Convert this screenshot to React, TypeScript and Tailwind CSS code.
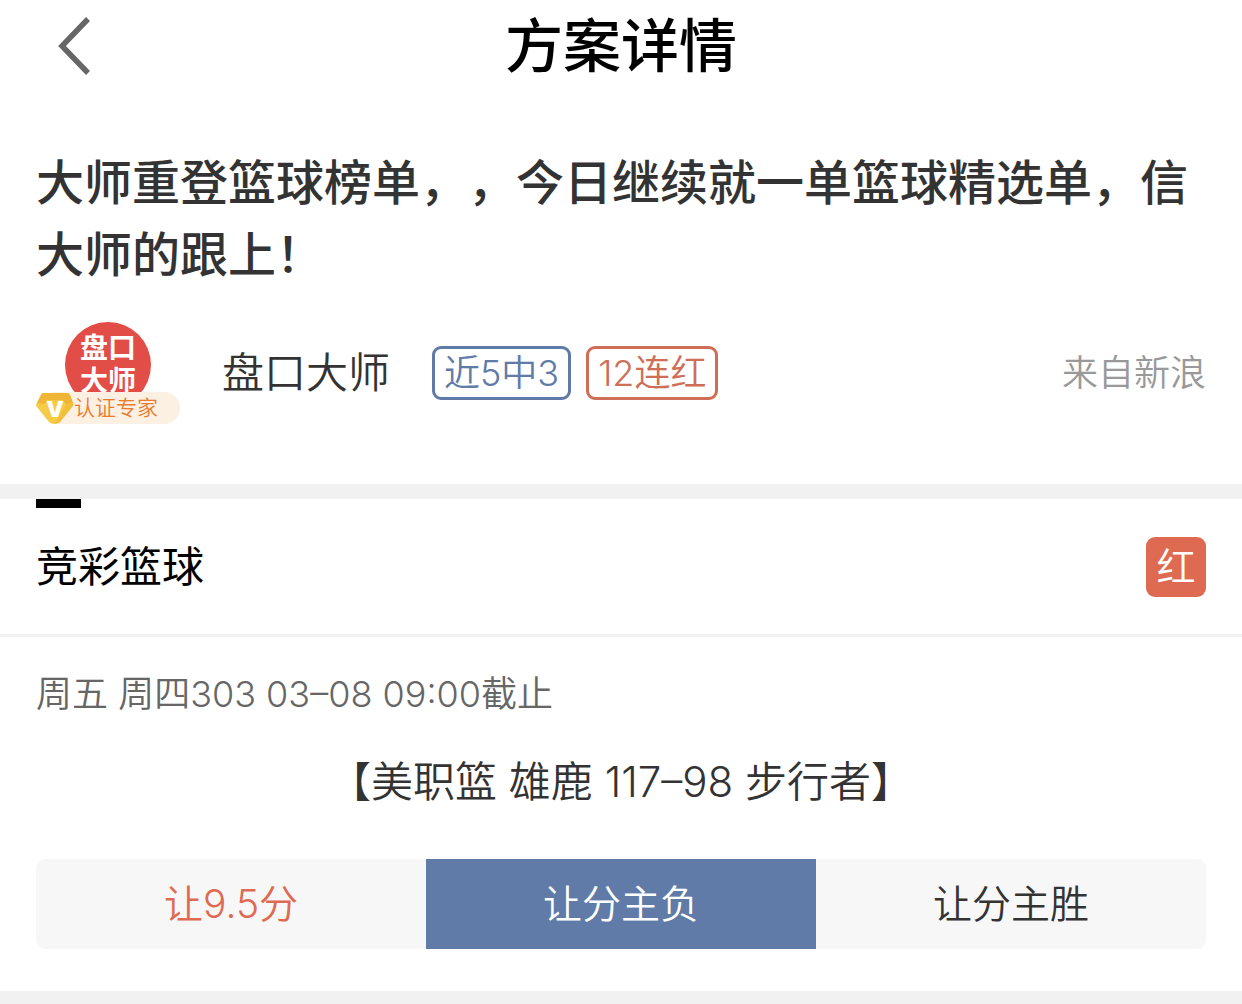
import React, { useState } from 'react'

const picks = [
  { id: "lose", label: "让分主负" },
  { id: "win", label: "让分主胜" },
];

const Header = () => {
  return (
    <header className="grid grid-cols-[1fr_auto_1fr] items-center h-[92px] px-9">
      <button aria-label="返回" className="w-[76px] h-[76px] flex items-center justify-center">
        <svg width="36" height="60" viewBox="0 0 36 60" fill="none" stroke="#666666" strokeWidth="5.5">
          <path d="M32 3 L6 30 L32 57" />
        </svg>
      </button>
      <h1 className="text-[58px] leading-[84px] font-medium text-black">方案详情</h1>
    </header>
  );
}

function Avatar() {
  return (
    <div className="relative w-36 h-[102px] shrink-0">
      <div className="mx-auto w-[86px] h-[86px] rounded-full bg-[#e24d47] pt-[10px] text-center text-white text-[28px] leading-[33px] font-bold overflow-hidden">
        盘口
        <br />
        大师
      </div>
      {/* certification badge over the lower part of the portrait */}
      <div className="absolute left-0 bottom-0 w-full h-8 flex items-center">
        <div className="absolute left-4 right-0 h-8 rounded-r-full bg-[#fcf0e3]"></div>
        <svg className="relative" width="38" height="32" viewBox="0 0 38 32">
          <path d="M7 1 H31 Q33 1 34 3 L37 11 Q38 13 36 15 L24 30 Q22 32 19 32 Q15 32 13 30 L1 15 Q-1 13 1 11 L5 3 Q6 1 7 1 Z" fill="#f6cb45" />
          <path d="M7 1 H31 Q33 1 34 3 L37 11 L30 12 L27 8 H11 L8 12 L1 11 L5 3 Q6 1 7 1 Z" fill="#efb536" />
          <path d="M30 12 L37 11 Q38 13 36 15 L24 30 L19 32 Z" fill="#f2bf3c" />
          <text x="19" y="25" textAnchor="middle" fontFamily="Inter, sans-serif" fontSize="22" fontWeight="900" fill="#ffffff">V</text>
        </svg>
        <span className="relative text-[21px] leading-[30px] font-[350] text-[#ea7a2c]">认证专家</span>
      </div>
    </div>
  );
}

function Author() {
  return (
    <div className="flex items-center mt-[31px]">
      <Avatar />
      <span className="ml-[42px] text-[42px] leading-[60px] font-[350] text-[#333333]">盘口大师</span>
      <div className="ml-[42px] flex gap-[15px] text-[36px] leading-[48px] font-[350]">
        <span className="border-3 border-[#607ba7] text-[#607ba7] rounded-[9px] px-[9px]">近5中3</span>
        <span className="border-3 border-[#ce6e56] text-[#ce6e56] rounded-[9px] px-[9px]">12连红</span>
      </div>
      <span className="ml-auto text-[36px] leading-[48px] font-[350] text-[#999999]">来自新浪</span>
    </div>
  );
}

function Match() {
  const [picked, setPicked] = useState("lose");

  return (
    <div className="px-9 pt-[30px] pb-[42px]">
      <p className="text-[36px] leading-[54px] font-[350] text-[#666666]">周五 周四303 03–08 09:00截止</p>
      <p className="mt-[31px] text-center text-[42px] leading-[60px] font-[350] text-[#333333]">【美职篮 雄鹿 117–98 步行者】</p>
      <div className="mt-[47px] grid grid-cols-3 h-[90px] rounded-[9px] overflow-hidden bg-[#f7f7f7] text-[39px] font-[350] text-center">
        <div className="leading-[90px] text-[#df6a52]">让9.5分</div>
        {picks.map((pick) => (
          <button
            key={pick.id}
            onClick={() => setPicked(pick.id)}
            className={picked === pick.id ? "bg-[#607ba7] text-white" : "text-[#333333]"}
          >
            {pick.label}
          </button>
        ))}
      </div>
    </div>
  );
}

const App = () => {
  return (
    <main className="w-full bg-white font-['Inter','Noto_Sans_CJK_SC',sans-serif] [text-spacing-trim:space-all]" lang="zh-CN">
      <Header />

      <section className="px-9 pt-[55px] pb-[60px]">
        <h2 className="text-[48px] leading-[72px] font-medium text-[#333333]">
          大师重登篮球榜单，，今日继续就一单篮球精选单，信大师的跟上！
        </h2>
        <Author />
      </section>

      <div className="h-[15px] bg-[#f1f1f1]"></div>

      <section>
        <div className="px-9 border-b-3 border-[#f1f1f1]">
          <div className="w-[45px] h-[9px] bg-black"></div>
          <div className="flex items-center justify-between h-[126px] pb-[9px]">
            <h3 className="text-[42px] leading-[60px] text-black">竞彩篮球</h3>
            <span className="w-[60px] h-[60px] rounded-[9px] bg-[#df6a52] text-white text-[39px] leading-[60px] font-[350] text-center">红</span>
          </div>
        </div>
        <Match />
      </section>

      <div className="h-[13px] bg-[#f1f1f1]"></div>
    </main>
  );
}

export default App
